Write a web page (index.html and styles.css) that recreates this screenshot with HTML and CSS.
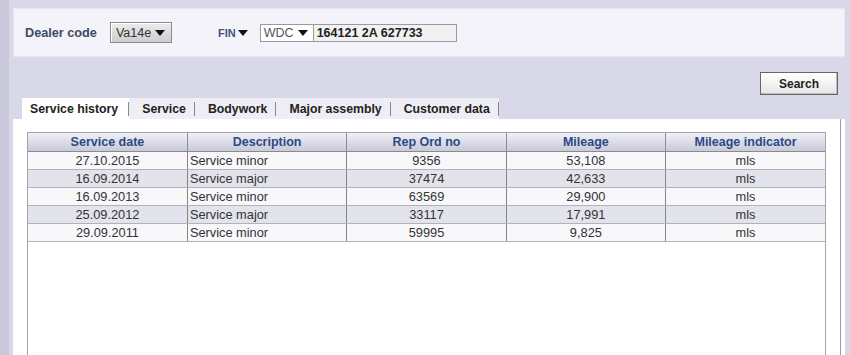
FILE: index.html
```html
<!DOCTYPE html>
<html lang="en">
<head>
  <meta charset="UTF-8">
  <title>Vehicle Service History</title>
  <link rel="stylesheet" href="styles.css">
</head>
<body>
  <div id="app">
    <!-- Filter bar -->
    <div id="filter-bar">
      <span class="label">Dealer code</span>
      <div class="dropdown dealer">Va14e <span class="caret"></span></div>
      <span class="fin-label">FIN<span class="caret small"></span></span>
      <div class="dropdown wmi">WDC <span class="caret"></span></div>
      <div class="fin-input">164121 2A 627733</div>
    </div>

    <!-- Actions -->
    <div id="actions">
      <button id="search">Search</button>
    </div>

    <!-- Tabs -->
    <div id="tabs">
      <div class="tab active">Service history</div>
      <div class="tab">Service</div>
      <div class="tab">Bodywork</div>
      <div class="tab">Major assembly</div>
      <div class="tab">Customer data</div>
    </div>

    <!-- Tab content -->
    <div id="panel">
      <div id="panel-body">
        <div class="grid">
          <table>
            <thead>
              <tr>
                <th>Service date</th>
                <th>Description</th>
                <th>Rep Ord no</th>
                <th>Mileage</th>
                <th>Mileage indicator</th>
              </tr>
            </thead>
            <tbody>
              <tr><td>27.10.2015</td><td class="left">Service minor</td><td>9356</td><td>53,108</td><td>mls</td></tr>
              <tr><td>16.09.2014</td><td class="left">Service major</td><td>37474</td><td>42,633</td><td>mls</td></tr>
              <tr><td>16.09.2013</td><td class="left">Service minor</td><td>63569</td><td>29,900</td><td>mls</td></tr>
              <tr><td>25.09.2012</td><td class="left">Service major</td><td>33117</td><td>17,991</td><td>mls</td></tr>
              <tr><td>29.09.2011</td><td class="left">Service minor</td><td>59995</td><td>9,825</td><td>mls</td></tr>
            </tbody>
          </table>
        </div>
      </div>
    </div>
  </div>
</body>
</html>
```

FILE: styles.css
```css
/* Base reset */
* { margin: 0; padding: 0; box-sizing: border-box; }
html, body { height: 355px; }
body {
  font-family: "Liberation Sans", Arial, sans-serif; font-size: 12px; color: #333;
  background-color: #d9d8e8; overflow: hidden;
}
#app {
  height: 100%; display: flex; flex-direction: column;
  border-left: 9px solid #cac9dc; padding: 8px 5px 0 4px;
}

/* Filter bar */
#filter-bar {
  height: 49px; display: flex; align-items: center; padding-left: 11px;
  background-color: #f3f3f9; border: 1px solid #e6e6f0;
}
.label { font-weight: bold; color: #3b4c66; font-size: 12.7px; margin-right: 13px; }
.dropdown {
  display: flex; align-items: center; justify-content: space-between;
  font-size: 12.5px; color: #333;
}
.dropdown.dealer {
  width: 62px; height: 21px; padding: 0 6px 0 5px;
  background: linear-gradient(#ececec, #cdcdcd); border: 1px solid #8a8a8a;
  box-shadow: inset 1px 1px 0 #fff;
}
.dropdown.wmi {
  width: 54px; height: 18px; padding: 0 5px 0 3px; color: #555;
  background-color: #fff; border: 1px solid #9a9a9a;
}
.caret {
  display: inline-block; width: 0; height: 0;
  border-left: 5px solid transparent; border-right: 5px solid transparent; border-top: 6px solid #111;
}
.caret.small { margin-left: 2px; vertical-align: 1px; }
.fin-label { margin-left: 46px; margin-right: 12px; font-weight: bold; font-size: 11px; color: #3b5680; }
.fin-input {
  width: 143px; height: 18px; line-height: 16px; padding-left: 3px;
  background-color: #f1f1f1; border: 1px solid #9a9a9a; border-left: none;
  font-weight: bold; color: #222; font-size: 12.5px;
}

/* Actions */
#actions { display: flex; justify-content: flex-end; padding: 15px 3px 0 0; }
#search {
  width: 78px; height: 23px; font-family: inherit; font-size: 12px; font-weight: bold; color: #222;
  background: linear-gradient(#ffffff, #e6e6e6); border: 1px solid #666;
  box-shadow: inset -1px -1px 0 #bbb; margin-right: 4px;
}

/* Tabs */
#tabs { display: flex; align-items: stretch; height: 21px; margin: 3px 0 0 9px; }
.tab {
  display: flex; align-items: center; padding: 0 9px 0 13px;
  background-color: #eeeef4; font-weight: bold; color: #222; position: relative; font-size: 12.3px;
}
.tab::after {
  content: ""; position: absolute; right: 0; top: 4px; width: 1px; height: 14px; background-color: #888;
}
.tab.active { background-color: #fff; padding: 0 11px 0 8px; }

/* Tab content */
#panel { flex: 1; background-color: #fff; padding: 0 4px 0 14px; }
#panel-body { height: 100%; border-right: 1px solid #9c9ca4; padding: 13px 14px 0 0; }
.grid { height: 100%; border: 1px solid #a4a4ac; border-bottom: none; }
table { width: 100%; border-collapse: collapse; table-layout: fixed; }
th {
  height: 18px; font-weight: bold; color: #2c4a86; font-size: 12.5px;
  background: linear-gradient(#f0f0f6, #c9c9d8); border-left: 1px solid #8c8c94;
  border-bottom: 1px solid #8a8a92;
}
th:first-child, td:first-child { border-left: none; }
td {
  height: 18px; text-align: center; color: #333; padding: 0 2px; font-size: 12.8px;
  border-left: 1px solid #85858c; border-bottom: 1px solid #b2b2ba;
}
td.left { text-align: left; }
tbody tr:nth-child(odd) td { background-color: #f8f8fb; }
tbody tr:nth-child(even) td { background-color: #e3e3ec; }
```
